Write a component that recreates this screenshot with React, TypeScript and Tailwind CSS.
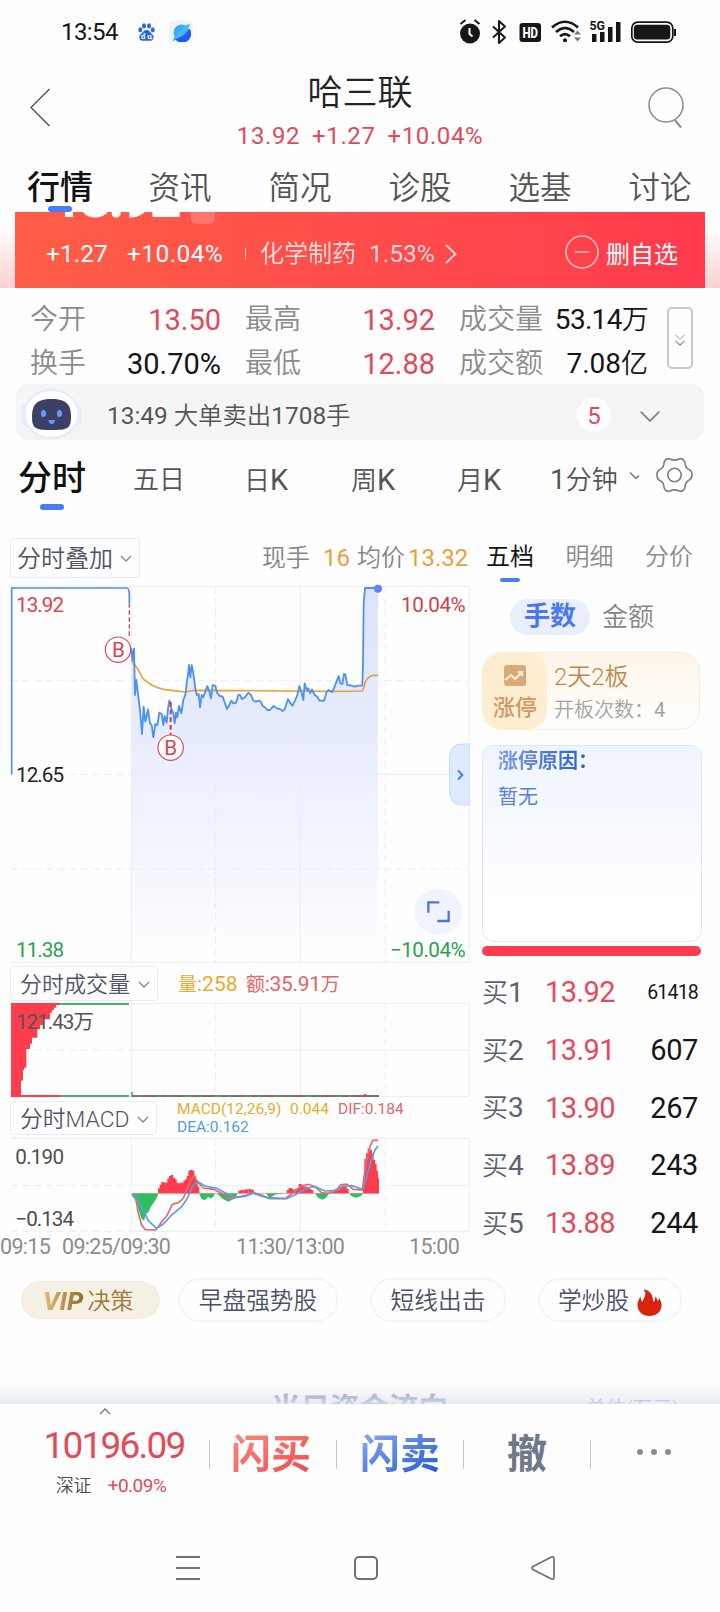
import { useState } from "react";

const priceLine =
  "394,205 397,240 402,205 405,345 409,300 415,350 420,390 426,462 431,380 436,425 444,388 450,430 455,435 460,472 466,432 472,436 478,398 485,402 490,435 494,408 500,428 504,385 508,362 514,385 520,400 524,430 528,398 532,412 537,378 544,400 550,360 556,345 560,310 564,285 567,255 571,292 575,255 580,280 586,325 590,345 596,342 600,382 605,345 610,352 616,335 622,318 628,335 633,355 638,315 646,318 652,340 660,348 668,350 675,370 681,387 688,375 694,362 700,370 708,368 715,345 720,345 726,357 735,352 745,338 753,345 760,362 768,365 776,362 782,365 788,378 795,382 802,390 810,390 820,378 830,385 840,387 848,393 854,388 864,358 870,368 877,377 885,362 892,345 898,318 904,335 910,360 914,310 920,330 925,325 930,340 936,328 944,345 952,350 958,362 972,362 980,335 986,330 996,336 1004,320 1012,298 1016,288 1021,310 1027,312 1032,282 1036,284 1042,315 1055,317 1065,320 1072,317 1087,317 1089,250 1091,70 1095,24 1134,24";

const avgLine =
  "394,240 402,252 410,262 418,275 428,295 440,305 455,315 470,322 490,328 520,332 556,336 580,331 720,332 1000,334 1087,333 1092,322 1095,308 1102,296 1112,288 1120,286 1134,286";

const macdUp = [
  [474, 685], [479, 674], [484, 666], [490, 668], [496, 668], [502, 655], [507, 648], [512, 645], [517, 654], [522, 658],
  [528, 668], [534, 670], [540, 668], [545, 670], [550, 662], [555, 658], [560, 648], [565, 632], [570, 630], [575, 632],
  [580, 648], [585, 660], [590, 680], [715, 692], [722, 690], [730, 689], [738, 688], [746, 687], [754, 689], [860, 690],
  [866, 684], [872, 686], [878, 690], [884, 687], [890, 684], [896, 672], [902, 674], [908, 680], [914, 680], [920, 684],
  [926, 687], [932, 690], [996, 695], [1002, 692], [1008, 690], [1014, 688], [1020, 680], [1026, 676], [1032, 680], [1038, 686],
];
const macdTail = [
  [1089, 650], [1093, 597], [1098, 580], [1103, 565], [1108, 570], [1113, 580], [1118, 600], [1122, 612], [1126, 632],
  [1129, 655],
];

const quotes = [
  ["买1", "13.92", "61418"],
  ["买2", "13.91", "607"],
  ["买3", "13.90", "267"],
  ["买4", "13.89", "243"],
  ["买5", "13.88", "244"],
];

const Chevron = ({ className = "" }: { className?: string }) => (
  <svg viewBox="0 0 12 8" className={className} fill="none" stroke="currentColor" strokeWidth="1.3">
    <path d="M1 1l5 5 5-5" />
  </svg>
);

const StatusBar = () => (
  <div className="flex h-16 items-center pl-[61px] text-[#161616]">
    <span className="w-[77px] text-[24px] leading-none tracking-[-0.6px]">13:54</span>
    <svg className="h-[18px] w-[17px]" viewBox="0 0 17 18">
      <g fill="#2468e0">
        <ellipse cx="2.3" cy="6.7" rx="2" ry="2.5" />
        <ellipse cx="6" cy="2.9" rx="2" ry="2.7" />
        <ellipse cx="11" cy="2.9" rx="2" ry="2.7" />
        <ellipse cx="14.8" cy="6.7" rx="2" ry="2.5" />
        <path d="M8.5 7c3 0 3.500 2.500 5.500 4 3 2.300 1.500 6.800-2 6.800H4.500C1 17.800 0 13.500 3 11c2-1.500 2.500-4 5.500-4z" />
      </g>
      <path d="M11 18c3 0 5-2 4.300-5z" fill="#a66be8" />
      <text x="2.700" y="16" fontSize="8" fontWeight="700" fill="#fff" textLength="11">du</text>
    </svg>
    <div className="ml-3.5 flex size-6 items-center justify-center rounded-md bg-[#f3f3f5]">
      <svg className="size-[19px]" viewBox="0 0 19 19">
        <circle cx="9.500" cy="9.500" r="8" fill="#3fa9fb" />
        <path d="M1 18C0 14 14 0 18 1c0 4-13 16-17 17z" fill="#48b5ff" />
        <path d="M17.500 5.500c-3 5-9 10-14.500 10.500a8.500 8.500 0 0 0 14.500-10.500z" fill="#1d5fe8" />
      </svg>
    </div>
    <svg className="ml-[266px] h-7 w-[220px]" viewBox="0 0 220 28" fill="#161616">
      <circle cx="11" cy="15.500" r="10" />
      <path d="M1.500 6l5-4M20.500 6l-5-4" stroke="#161616" strokeWidth="2" />
      <path d="M10.500 10v6l3 2.500" stroke="#fff" strokeWidth="2" fill="none" />
      <path d="M34 8.500l12 11-6 5.500V3l6 5.500-12 11" fill="none" stroke="#161616" strokeWidth="2" strokeLinejoin="round" />
      <rect x="60.500" y="5" width="21.500" height="19" rx="3" />
      <text x="63.500" y="19.800" fontSize="15" fontWeight="800" fill="#fff" textLength="15.500" lengthAdjust="spacingAndGlyphs">HD</text>
      <g fill="none" stroke="#161616" strokeWidth="2.600">
        <path d="M93 9.500q13-11.500 26 0" />
        <path d="M97 14q9-8 18 0" />
        <path d="M101 18.300q5-4.500 10 0" />
      </g>
      <circle cx="106" cy="22.200" r="2" />
      <path d="M115 16.500l3.500-4 3.500 4zM115 19.500l3.500 4 3.500-4z" fill="#777" />
      <text x="130.500" y="12.300" fontSize="12.500" fontWeight="700" textLength="15.500" lengthAdjust="spacingAndGlyphs">5G</text>
      <path d="M133 16h4.500v8H133zM141 14h4.500v10H141zM149 9h4.500v15H149zM157 4h4.500v20H157z" />
      <rect x="172.800" y="4.200" width="41" height="20" rx="6" fill="none" stroke="#161616" strokeWidth="1.700" />
      <rect x="174.800" y="6.800" width="36.500" height="14.800" rx="3.500" />
      <path d="M215 11h2v7h-2z" />
    </svg>
  </div>
);

const Header = () => (
  <div className="flex h-[94px] items-start justify-between pt-[7px] pr-9 pl-[30px]">
    <svg className="mt-[17px] h-[39px] w-[21px]" viewBox="0 0 21 39" fill="none" stroke="#555" strokeWidth="1.500">
      <path d="M19.500 1L1 19.500 19.500 38" />
    </svg>
    <div className="ml-[21px] flex flex-col items-center pt-0.5">
      <h1 className="h-[42px] text-[35px] leading-[42px] font-[350] text-[#222]">哈三联</h1>
      <div className="mt-[7px] flex gap-3 text-[24px] leading-[28px] tracking-[0.6px] text-[#e04a5a]">
        <span>13.92</span>
        <span>+1.27</span>
        <span>+10.04%</span>
      </div>
    </div>
    <svg className="mt-4 h-[42px] w-9" viewBox="0 0 36 42" fill="none" stroke="#8c8c8c" strokeWidth="1.500">
      <circle cx="18" cy="18" r="17" />
      <path d="M26.500 32.500l6.500 8" strokeWidth="2" />
    </svg>
  </div>
);

const topTabs = ["行情", "资讯", "简况", "诊股", "选基", "讨论"];

const TopTabs = ({ active, onChange }: { active: string; onChange: (t: string) => void }) => (
  <div className="relative z-10 grid h-[54px] grid-cols-6">
    {topTabs.map((tab) => (
      <button key={tab} type="button" onClick={() => onChange(tab)} className="flex flex-col items-center">
        {tab === active ? (
          <span className="h-12 text-[33px] leading-[60px] font-medium text-[#111]">{tab}</span>
        ) : (
          <span className="h-12 text-[31.500px] leading-[61px] font-[350] text-[#555]">{tab}</span>
        )}
        {tab === active && <span className="h-1.5 w-6 rounded-full bg-[#4a7cf5]" />}
      </button>
    ))}
  </div>
);

const Banner = () => (
  <div className="flex h-[76px]">
    <div className="w-[15px] bg-linear-to-b from-white from-20% to-[#ffd0d2]" />
    <div className="relative flex h-[76px] w-[690px] items-center overflow-hidden bg-linear-to-r from-[#ff5d47] to-[#ff3a4d] pt-2 pl-[31px] text-[24.500px] leading-none text-white">
      <span className="absolute -top-[42px] left-[36px] text-[56px] leading-none font-bold tracking-[-3.500px]">13.92</span>
      <span className="absolute -top-3 left-[176px] size-6 rounded-md bg-white/20" />
      <span className="w-[81px]">+1.27</span>
      <span className="w-[118px] tracking-[0.4px]">+10.04%</span>
      <span className="h-3 w-px bg-white/70" />
      <span className="ml-[14px] w-[109px] text-[24px] font-[350] opacity-85">化学制药</span>
      <span className="w-[76px] opacity-80">1.53%</span>
      <svg className="h-5 w-3" viewBox="0 0 12 20" fill="none" stroke="#ffd9db" strokeWidth="1.800">
        <path d="M1 1l9.500 9L1 19" />
      </svg>
      <svg className="-mt-1 ml-[108px] size-[34px]" viewBox="0 0 34 34" fill="none" stroke="#ffc4c8" strokeWidth="1.500">
        <circle cx="17" cy="17" r="16" />
        <path d="M10 17h14" />
      </svg>
      <span className="mt-0.5 ml-[7px] text-[24px]">删自选</span>
    </div>
    <div className="grow bg-linear-to-b from-white from-20% to-[#ffd0d2]" />
  </div>
);

const Stats = () => (
  <div className="flex h-24 pt-[10px] pl-[30px]">
    <div className="grid h-[88px] w-[618px] grid-cols-[55px_136px_80px_134px_111px_102px] grid-rows-2 items-center text-[29px] leading-none whitespace-nowrap">
      <span className="text-[28px] font-[350] text-[#8c8c8c]">今开</span>
      <span className="text-right text-[#e04a5a]">13.50</span>
      <span className="pl-6 text-[28px] font-[350] text-[#8c8c8c]">最高</span>
      <span className="text-right text-[#e04a5a]">13.92</span>
      <span className="pl-6 text-[28px] font-[350] text-[#8c8c8c]">成交量</span>
      <span className="text-right text-[28px] tracking-[-0.7px] text-[#161616]">53.14<span className="text-[27px] font-[350]">万</span></span>
      <span className="text-[28px] font-[350] text-[#8c8c8c]">换手</span>
      <span className="text-right text-[#161616]">30.70%</span>
      <span className="pl-6 text-[28px] font-[350] text-[#8c8c8c]">最低</span>
      <span className="text-right text-[#e04a5a]">12.88</span>
      <span className="pl-6 text-[28px] font-[350] text-[#8c8c8c]">成交额</span>
      <span className="text-right text-[28px] text-[#161616]">7.08<span className="text-[27px] font-[350]">亿</span></span>
    </div>
    <div className="mt-[9px] ml-[19px] flex h-[62px] w-[26px] flex-col items-center justify-center rounded-[5px] border-2 border-[#c8c8c8] pt-1 text-[#888]">
      <Chevron className="h-[7px] w-3.5 opacity-60" />
      <Chevron className="-mt-px h-[7px] w-3.5" />
    </div>
  </div>
);

const AlertBar = () => (
  <div className="mx-4 flex h-14 items-center rounded-xl bg-[#f5f5f5] pl-[5px]">
    <svg className="mt-1 h-[50px] w-[61px]" viewBox="0 0 61 50">
      <rect x="0.500" y="15" width="10" height="22" rx="5" fill="#e6eefd" />
      <rect x="50.500" y="15" width="10" height="22" rx="5" fill="#e6eefd" />
      <ellipse cx="30.500" cy="25" rx="27" ry="24" fill="#fff" stroke="#e4edfd" strokeWidth="2" />
      <path d="M30.500 10C46 10 50 16 50 28S46 41 30.500 41 11 40 11 28 15 10 30.500 10z" fill="#3d4065" />
      <ellipse cx="22.500" cy="24.500" rx="2.600" ry="3.500" fill="#5f9bff" />
      <ellipse cx="38.500" cy="24.500" rx="2.600" ry="3.500" fill="#5f9bff" />
      <path d="M27.500 31h6.500q-.5 4-3.250 4t-3.250-4z" fill="#5f9bff" />
    </svg>
    <span className="ml-[25px] w-[470px] pt-2 text-[24.400px] leading-none font-[350] text-[#555]">
      <span className="font-normal">13:49</span> 大单卖出<span className="font-normal">1708</span>手
    </span>
    <span className="mt-1.5 flex size-[34px] items-center justify-center rounded-full bg-white pt-0.5 text-[24px] text-[#e04a5a]">5</span>
    <svg className="mt-2 ml-[29px] h-[11px] w-5 text-[#888]" viewBox="0 0 20 11" fill="none" stroke="currentColor" strokeWidth="1.800">
      <path d="M.7 .7L10 10 19.300 .7" />
    </svg>
  </div>
);

const periods = ["日", "周", "月"];

const PeriodTabs = () => (
  <div className="flex h-[98px] pt-[15px] pl-[18px] text-[26px] leading-none font-[350] text-[#555]">
    <button type="button" className="flex h-[55px] w-[68px] flex-col items-center text-[34px] font-medium text-[#111]">
      <span className="h-[49px] leading-[46px]">分时</span>
      <span className="h-1.5 w-6 rounded-full bg-[#4a7cf5]" />
    </button>
    <div className="ml-[21px] grid h-[50px] grid-cols-[104px_110px_104px_108px] items-center justify-items-center">
      <span>五日</span>
      {periods.map((p) => (
        <span key={p}>{p}<span className="text-[29px] font-normal">K</span></span>
      ))}
    </div>
    <span className="ml-[17px] h-[50px] w-[76px] leading-[50px] whitespace-nowrap"><span className="text-[28px] font-normal">1</span>分钟</span>
    <svg className="mt-[17px] ml-[3px] h-2 w-3 text-[#777]" viewBox="0 0 12 8" fill="none" stroke="currentColor" strokeWidth="1.500">
      <path d="M1 .5l6 6 3-3" />
    </svg>
    <svg className="mt-0.5 ml-[15px] h-[36px] w-[37px]" viewBox="0 0 37 36" fill="none" stroke="#7d7d7d" strokeWidth="1.600">
      <path d="M10 2.500Q12 1 14 2q4.500 2.300 9 0 2-1 4 .5t2 3.500q.3 5 4.500 6.800 2.500 1.200 2.500 5t-2.500 5Q29.300 25 29 30q0 2-2 3.500t-4 .5q-4.500-2.300-9 0-2 1-4-.5T8 30q-.3-5-4.500-6.800Q1 22 1 18t2.500-5.200Q7.700 11 8 6q0-2 2-3.500z" />
      <circle cx="18.500" cy="18" r="6.700" />
    </svg>
  </div>
);

const Select = ({ label, className }: { label: string; className: string }) => (
  <button type="button" className={`flex items-center rounded-[4px] border border-[#ebecf0] leading-none font-[350] whitespace-nowrap text-[#4f5565] ${className}`}>
    <span className="grow text-left">{label}</span>
    <Chevron className="mr-[7px] h-2 w-3 text-[#888]" />
  </button>
);

const MainChart = () => (
  <svg className="h-96 w-[470px]" viewBox="0 0 1410 1152" fill="none">
    <defs>
      <linearGradient id="fill" x1="0" y1="0" x2="0" y2="1">
        <stop offset="0" stopColor="#dbe3fc" />
        <stop offset="0.600" stopColor="#eff2fe" />
        <stop offset="1" stopColor="#ffffff" />
      </linearGradient>
    </defs>
    <polygon points={`394,1146 ${priceLine} 1134,1146`} fill="url(#fill)" />
    <g stroke="#eaedf3" strokeWidth="3">
      <path d="M33 19H1407V1147H33M394 19V1147M901 19V1147M394 583H1407" />
      <path d="M33 301H1407M33 867H1407M33 583H394M647 19V1147M1156 19V1147" strokeDasharray="21 14" />
    </g>
    <path d="M35 583V24H380Q388 24 388 45V70" stroke="#4f90e0" strokeWidth="5" />
    <polyline points={avgLine} stroke="#eaa03c" strokeWidth="5" />
    <polyline points={priceLine} stroke="#4f92ee" strokeWidth="5.500" strokeLinejoin="round" />
    <circle cx="1134" cy="26" r="12" fill="#5c88f0" />
    <path d="M388 70V175" stroke="#cf4450" strokeWidth="4" strokeDasharray="13 8" />
    <path d="M512 366V465" stroke="#d83349" strokeWidth="6" strokeDasharray="14 9" />
    <g fill="#fff" stroke="#dc4a57" strokeWidth="3.500">
      <circle cx="354" cy="209" r="38" />
      <circle cx="512" cy="503" r="38" />
    </g>
    <g fontSize="62" fill="#dc4450" textAnchor="middle">
      <text x="355" y="231">B</text>
      <text x="512" y="525">B</text>
    </g>
    <g fontSize="62">
      <text x="48" y="96" fill="#d9444f" textLength="144">13.92</text>
      <text x="48" y="605" fill="#222" textLength="144">12.65</text>
      <text x="48" y="1131" fill="#2ba052" textLength="144">11.38</text>
      <text x="1203" y="96" fill="#d04048" textLength="194">10.04%</text>
      <text x="1170" y="1131" fill="#2ba052" textLength="227">−10.04%</text>
    </g>
    <path d="M1410 492H1389Q1349 492 1349 532V635Q1349 675 1389 675H1410z" fill="#deebfd" stroke="#c5d8f4" strokeWidth="3" />
    <path d="M1374 571L1387 585 1374 599" stroke="#4a7be6" strokeWidth="6" />
    <ellipse cx="1314" cy="995" rx="72" ry="69" fill="#f0f4fe" />
    <path d="M1285 998V967H1318M1346 992V1023H1312" stroke="#4f74d8" strokeWidth="7" />
  </svg>
);

const VolumeChart = () => (
  <svg className="h-[100px] w-[470px]" viewBox="0 120 1410 300" fill="none">
    <g stroke="#eaedf3" strokeWidth="3">
      <path d="M33 130H1407V410H33M394 130V410M901 130V410M394 270H1407" />
      <path d="M33 270H394M647 130V410M1156 130V410" strokeDasharray="21 14" />
    </g>
    <path
      d="M33 129H182V135H168V143H162V150H156V158H150V178H130V195H120V208H112V233H96V251H90V267H79V323H72V330H69V362H63V405H182V411H33z"
      fill="#fd3d4d"
    />
    <path d="M182 129H387V135H182zM182 405H387V411H182z" fill="#4fae73" />
    <path d="M394 408H1137" stroke="#444" strokeWidth="5" />
    <path d="M400 408H1090" stroke="#e04a5a" strokeWidth="5" strokeDasharray="22 18 9 31" />
    <path d="M412 408H1080" stroke="#35b565" strokeWidth="5" strokeDasharray="12 42 20 16" />
    <path d="M396 410V396" stroke="#35b565" strokeWidth="5" />
    <path d="M1096 410V402" stroke="#fd3d4d" strokeWidth="7" />
    <text x="48" y="207" fontSize="62" fill="#555" textLength="234">121.43万</text>
  </svg>
);

const MacdChart = () => (
  <svg className="h-[98px] w-[470px]" viewBox="0 528 1410 294" fill="none">
    <g stroke="#eaedf3" strokeWidth="3">
      <path d="M33 535H1407V814H394V535M901 535V814M394 676H1407" />
      <path d="M33 676H394M33 814H394M647 535V814M1156 535V814" strokeDasharray="21 14" />
    </g>
    {[...macdUp, ...macdTail].map(([x, y]) => (
      <rect key={x} x={x} y={y} width="8" height={700 - y} fill="#fd3d4d" />
    ))}
    <path d="M396 700H474V706L468 716 460 730 452 742 446 755 438 762 432 782 424 775 416 750 408 720z" fill="#2fbf61" />
    <path d="M597 700H645L640 710 632 716 625 710 615 720 605 718zM650 700H713L705 715 685 725 670 718zM798 700H855L825 704 808 715zM945 700H987L980 712 968 719 955 714zM1047 700H1090L1082 709 1068 713 1055 709z" fill="#2fbf61" />
    <path d="M396 700H1137" stroke="#e38288" strokeWidth="2" />
    <polyline
      points="396,703 408,720 415,760 425,795 436,809 468,810 485,785 500,768 517,733 535,728 550,715 560,690 575,655 582,646 592,665 610,684 640,688 665,700 690,717 710,712 735,707 760,698 785,705 810,716 855,716 880,698 905,678 925,673 945,680 965,698 985,700 1010,690 1022,674 1040,672 1060,688 1087,690 1092,650 1100,600 1110,560 1118,541 1134,541"
      stroke="#e66a6a"
      strokeWidth="5"
    />
    <polyline
      points="396,703 408,715 425,740 445,782 470,805 490,792 515,765 545,740 562,715 580,675 594,665 615,678 650,685 675,698 705,712 735,709 760,700 800,713 860,716 890,702 920,684 945,680 975,693 1000,692 1030,679 1055,677 1088,688 1100,650 1112,605 1125,570 1134,558"
      stroke="#56a0e4"
      strokeWidth="5"
    />
    <g fontSize="62" fill="#4d4d4d">
      <text x="46" y="611" textLength="146">0.190</text>
      <text x="46" y="798" textLength="176">−0.134</text>
    </g>
  </svg>
);

const ChartPanel = () => (
  <div className="flex w-[470px] flex-col">
    <div className="flex h-[42px] items-start pl-[10px] text-[24px] leading-none">
      <Select label="分时叠加" className="h-10 w-[130px] pt-0.5 pl-[6px] text-[24px]" />
      <div className="ml-[122px] flex h-[40px] items-center whitespace-nowrap">
        <span className="w-[61px] font-[350] text-[#858585]">现手</span>
        <span className="w-[34px] text-[#eaa03c]">16</span>
        <span className="w-[51px] font-[350] text-[#858585]">均价</span>
        <span className="text-[#eaa03c]">13.32</span>
      </div>
    </div>
    <MainChart />
    <div className="flex h-9 items-center pl-[10px] text-[21px] leading-none">
      <Select label="分时成交量" className="mt-[3px] h-[35px] w-[148px] pt-0.5 pl-[9px] text-[22px]" />
      <span className="mt-1 ml-5 w-[68px] whitespace-nowrap text-[#e8ab2e]"><span className="text-[19px]">量</span>:258</span>
      <span className="mt-1 tracking-[-0.3px] whitespace-nowrap text-[#e46566]"><span className="text-[19px]">额</span>:35.91<span className="text-[19px]">万</span></span>
    </div>
    <VolumeChart />
    <div className="flex h-9 pl-[10px]">
      <Select label="分时MACD" className="mt-px h-[34px] w-[147px] pt-1 pl-[9px] text-[22.800px]" />
      <div className="ml-5 text-[15.500px] leading-[18px] whitespace-nowrap">
        <div className="flex text-[#e8ab2e]">
          <span className="w-[113px]">MACD(12,26,9)</span>
          <span className="w-12">0.044</span>
          <span className="text-[#e46566]">DIF:0.184</span>
        </div>
        <div className="text-[#4f9fe0]">DEA:0.162</div>
      </div>
    </div>
    <MacdChart />
    <div className="flex h-[25px] items-center text-[21.500px] leading-none tracking-[-0.7px] whitespace-nowrap text-[#8c8c8c]">
      <span className="w-[62px]">09:15</span>
      <span className="w-[174px]">09:25/09:30</span>
      <span className="w-[173px]">11:30/13:00</span>
      <span>15:00</span>
    </div>
  </div>
);

const QuotePanel = () => (
  <div className="ml-3 w-[222px] leading-none">
    <div className="flex h-[61px] justify-between pr-[11px] pl-[4px] text-[24px] font-[350] text-[#8c8c8c]">
      <div className="flex flex-col items-center">
        <span className="h-10 leading-[39px] font-normal text-[#161616]">五档</span>
        <span className="h-1 w-5 rounded-full bg-[#4a7cf5]" />
      </div>
      <span className="h-10 leading-[39px]">明细</span>
      <span className="h-10 leading-[39px]">分价</span>
    </div>
    <div className="flex h-9 items-center pl-7 text-[26px]">
      <span className="h-9 w-20 rounded-full bg-[#eaeffe] text-center leading-[35px] font-bold text-[#4a78f0]">手数</span>
      <span className="ml-3 font-[350] text-[#858585]">金额</span>
    </div>
    <div className="mt-[17px] flex h-[78px] w-[218px] rounded-[20px] border border-[#fdecd0] bg-linear-to-b from-[#fff6e8] to-white">
      <div className="flex w-16 flex-col items-center rounded-[18px] bg-[#feedd0] pt-3">
        <svg className="h-[22px] w-[22px]" viewBox="0 0 22 22" fill="none">
          <rect width="22" height="21" rx="3" fill="#dba978" />
          <path d="M1 15l6-5 4 4 6-6M14 7h4v4" stroke="#ffefd9" strokeWidth="2" />
        </svg>
        <span className="mt-[10px] text-[22px] font-medium text-[#cc9865]">涨停</span>
      </div>
      <div className="ml-[7px] whitespace-nowrap">
        <div className="mt-[12px] text-[24px] font-[350] text-[#bd8950]">2天2板</div>
        <div className="mt-[11px] text-[20px] font-[350] text-[#a3a3a3]">开板次数：<span className="font-normal">4</span></div>
      </div>
    </div>
    <div className="mt-[15px] h-[197px] w-[220px] rounded-[12px] border border-[#dce8f5] bg-linear-to-b from-[#eff5ff] to-white to-80% pl-[15px] text-[20px]">
      <div className="mt-[3px] w-fit bg-linear-to-r from-[#7b9af5] to-[#1e57c8] bg-clip-text leading-6 font-bold text-transparent">涨停原因：</div>
      <div className="mt-[12px] leading-6 text-[#567fd8]">暂无</div>
    </div>
    <div className="mt-[4px] h-[10px] w-[219px] rounded-full bg-[#fd3d4d]" />
    <div className="mt-[8px]">
      {quotes.map(([label, price, volume]) => (
        <div key={label} className="flex h-[57.700px] items-center text-[29px]">
          <span className="w-[63px] text-[26px] font-[350] whitespace-nowrap text-[#5c6274]">{label.charAt(0)}<span className="text-[28px] font-normal">{label.charAt(1)}</span></span>
          <span className="tracking-[-0.6px] text-[#e44a59]">{price}</span>
          {volume.length > 3 ? (
            <span className="grow pr-1.5 text-right text-[19.500px] tracking-[-0.8px] text-[#161616]">{volume}</span>
          ) : (
            <span className="grow pr-1.5 text-right tracking-[-0.4px] text-[#161616]">{volume}</span>
          )}
        </div>
      ))}
    </div>
  </div>
);

const Chips = () => (
  <div className="mt-[14px] flex h-11 items-center text-[23.700px] leading-none font-[350] whitespace-nowrap text-[#4a5268]">
    <span className="ml-[21px] flex h-[38px] w-[139px] items-center rounded-full bg-[#f5f0e4] pt-0.5 pl-[22px] text-[23px] font-[350] text-[#9a7a35]">
      <span className="mr-0.5 bg-linear-to-r from-[#e0bd78] to-[#8f6c20] bg-clip-text pr-0.5 text-[26px] font-extrabold text-transparent italic">VIP</span>
      决策
    </span>
    <span className="ml-[18px] flex h-11 w-[160px] items-center justify-center rounded-full border-2 border-[#f2f5fc] pt-1">早盘强势股</span>
    <span className="ml-[32px] flex h-11 w-[136px] items-center justify-center rounded-full border-2 border-[#f2f5fc] pt-1">短线出击</span>
    <span className="ml-[32px] flex h-11 w-[144px] items-center rounded-full border-2 border-[#f2f5fc] pt-1 pl-[18px]">
      学炒股
      <svg className="ml-2 h-[27px] w-[25px]" viewBox="0 0 25 27">
        <path d="M6.500 .5c6 .5 10 5 9.500 12.500 2-1 2.500-3 2-5.500 1.500 1 2.500 3 2.500 4.500 1-.5 1.500-2 1.500-3 1.500 2 2.500 4.500 2.500 7.500C24.500 22.500 19.500 27 12.500 27S.5 22.500 .5 15.500C.5 12.500 2 9.500 4 7.500c-.5 2.500 0 4.500 1.500 5.500C6 9 11 6 6.500 .5z" fill="#d9230b" />
      </svg>
    </span>
  </div>
);

const BottomBar = () => (
  <div className="flex h-[106px] items-start">
    <div className="flex h-[100px] w-[209px] flex-col items-center pt-[3px]">
      <Chevron className="h-2 w-3.5 rotate-180 text-[#777]" />
      <span className="mt-[12px] ml-[19px] text-[37px] leading-[38px] tracking-[-1.800px] text-[#e44a59]">10196.09</span>
      <div className="mt-[12px] ml-[13px] flex gap-4 text-[18px] leading-[18px] text-[#4d4d4d]">
        <span className="font-[350]">深证</span>
        <span className="text-[19px] tracking-[-0.5px] text-[#e04a5a]">+0.09%</span>
      </div>
    </div>
    <div className="mt-9 flex h-[29px] items-center border-l border-[#c8c8c8] text-[40px] leading-[46px] font-bold">
      <div className="flex h-[29px] w-[127px] items-center justify-center border-r border-[#c8c8c8] pr-1">
        <span className="shrink-0 bg-linear-to-br from-[#fc8a7c] to-[#ef4350] bg-clip-text text-transparent">闪买</span>
      </div>
      <div className="flex h-[29px] w-[127px] items-center justify-center border-r border-[#c8c8c8]">
        <span className="shrink-0 bg-linear-to-br from-[#8ca8fa] to-[#1857c9] bg-clip-text text-transparent">闪卖</span>
      </div>
      <div className="flex h-[29px] w-[127px] items-center justify-center border-r border-[#c8c8c8]">
        <span className="shrink-0 text-[#70788a]">撤</span>
      </div>
    </div>
    <div className="mt-[45px] flex grow justify-center gap-2 pr-3 pl-2">
      <span className="size-1.5 rounded-full bg-[#8c8c8c]" />
      <span className="size-1.5 rounded-full bg-[#8c8c8c]" />
      <span className="size-1.5 rounded-full bg-[#8c8c8c]" />
    </div>
  </div>
);

const SystemNav = () => (
  <div className="flex h-[102px] items-start pt-[46px] pl-[176px]">
    <svg className="h-[24px] w-6" viewBox="0 0 24 24" stroke="#707070" strokeWidth="2">
      <path d="M0 1h24M0 12h24M0 23h24" />
    </svg>
    <span className="ml-[154px] size-6 rounded-[5px] border-2 border-[#707070]" />
    <svg className="ml-[153px] size-6" viewBox="0 0 24 24" fill="none" stroke="#707070" strokeWidth="1.700" strokeLinejoin="round">
      <path d="M2 10.500L20 1.300q3-1.300 3 1.500v18.500q0 2.800-3 1.500L2 13.500q-2-1.500 0-3z" />
    </svg>
  </div>
);

const App = () => {
  const [tab, setTab] = useState("行情");

  return (
    <div className="h-[1612px] w-[720px] overflow-hidden bg-[#fefefe] font-[Roboto,'Noto_Sans_CJK_SC',sans-serif]">
      <StatusBar />
      <Header />
      <TopTabs active={tab} onChange={setTab} />
      <Banner />
      <Stats />
      <AlertBar />
      <PeriodTabs />
      <div className="flex h-[726px]">
        <ChartPanel />
        <QuotePanel />
      </div>
      <Chips />
      <div className="relative mt-[61px] h-[21px] overflow-hidden">
        <div className="flex pt-[12px] pl-[271px] leading-none">
          <span className="text-[29.500px] font-bold text-[#7f8898]">当日资金流向</span>
          <span className="mt-1 ml-[138px] text-[20px] font-[350] text-[#888]">单位(万元)</span>
        </div>
        <div className="absolute inset-0 bg-linear-to-b from-white/10 to-[#e1e8f3]/80" />
      </div>
      <BottomBar />
      <SystemNav />
    </div>
  );
};

export default App;
